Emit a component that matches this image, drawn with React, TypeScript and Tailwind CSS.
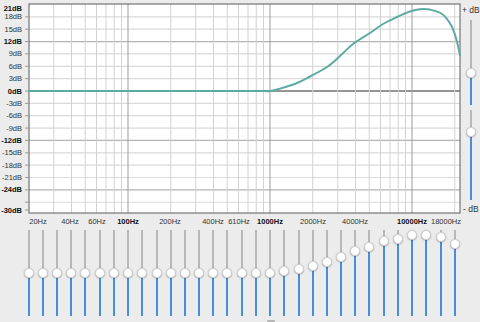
import React from "react";

const fx = (f: number) => 128 + 142 * Math.log10(f / 100);
const dy = (db: number) => 91 - db * 4.12;
const FONT = '"Liberation Sans", Arial, sans-serif';

const PL = 29, PR = 460, PT = 4, PB = 213;

function smoothPath(pts: [number, number][]) {
  let d = `M ${pts[0][0]} ${pts[0][1]}`;
  for (let i = 0; i < pts.length - 1; i++) {
    const p0 = pts[i - 1] || pts[i];
    const p1 = pts[i];
    const p2 = pts[i + 1];
    const p3 = pts[i + 2] || p2;
    const c1x = p1[0] + (p2[0] - p0[0]) / 6;
    const c1y = p1[1] + (p2[1] - p0[1]) / 6;
    const c2x = p2[0] - (p3[0] - p1[0]) / 6;
    const c2y = p2[1] - (p3[1] - p1[1]) / 6;
    d += ` C ${c1x} ${c1y} ${c2x} ${c2y} ${p2[0]} ${p2[1]}`;
  }
  return d;
}

const curvePts: [number, number][] = [
  [29, 91], [250, 91], [262, 91], [270, 91], [280, 88.6], [297, 83], [310, 76.5],
  [327, 67], [340, 56], [353, 44], [370, 33], [383, 24], [397, 17], [410, 11.5],
  [420, 9.2], [430, 9.6], [442, 14], [451, 25], [456, 38], [460, 55],
];

const vFreqs: { f: number; major: boolean }[] = [];
[10, 100, 1000, 10000].forEach((dec) => {
  for (let m = 1; m <= 9; m++) {
    const f = dec * m;
    if (f > 20 && f <= 20000) vFreqs.push({ f, major: m === 1 });
  }
});

const hLines: number[] = [];
for (let d = 18; d >= -27; d -= 3) hLines.push(d);

const yLabels: { t: string; y: number; b: boolean }[] = [
  { t: "21dB", y: 8, b: true },
  ...[18, 15, 12, 9, 6, 3, 0, -3, -6, -9, -12, -15, -18, -21, -24].map((d) => ({
    t: `${d}dB`,
    y: dy(d),
    b: d === 12 || d === 0 || d === -12 || d === -24,
  })),
  { t: "-30dB", y: 210, b: true },
];

const xLabels: { t: string; x: number; b?: boolean }[] = [
  { t: "20Hz", x: 38 },
  { t: "40Hz", x: 70 },
  { t: "60Hz", x: 97 },
  { t: "100Hz", x: 128, b: true },
  { t: "200Hz", x: 170 },
  { t: "400Hz", x: 213 },
  { t: "610Hz", x: 239 },
  { t: "1000Hz", x: 270, b: true },
  { t: "2000Hz", x: 313 },
  { t: "4000Hz", x: 355 },
  { t: "10000Hz", x: 412, b: true },
  { t: "18000Hz", x: 446 },
];

const bands = [20, 25, 31.5, 40, 50, 63, 80, 100, 125, 160, 200, 250, 315, 400, 500, 630, 800, 1000, 1250, 1600, 2000, 2500, 3150, 4000, 5000, 6300, 8000, 10000, 12500, 16000, 20000];
const knobs = [273, 273, 273, 273, 273, 273, 273, 273, 273, 273, 273, 273, 273, 273, 273, 273, 273, 273, 271, 269, 266, 262, 257, 251, 247, 241, 239, 235, 235, 237, 244];

function Chart() {
  return (
    <svg width={462} height={228} className="block shrink-0" style={{ fontFamily: FONT }}>
      <rect x={PL} y={PT} width={PR - PL} height={PB - PT} fill="#ffffff" />
      {hLines.map((d) => (
        <line key={d} x1={PL} x2={PR} y1={dy(d)} y2={dy(d)} stroke={d === 0 ? "#2a2a2a" : d === 12 || d === -12 || d === -24 ? "#b4b4b4" : "#dadada"} strokeWidth={d === 0 ? 1 : 1.2} />
      ))}
      {vFreqs.map(({ f, major }) => (
        <line key={f} x1={fx(f)} x2={fx(f)} y1={PT} y2={PB} stroke={major ? "#9c9c9c" : "#d2d2d2"} strokeWidth={1} />
      ))}
      <rect x={PL} y={PT} width={PR - PL} height={PB - PT} fill="none" stroke="#5a5a5a" strokeWidth={1} />
      {[...hLines, -30].map((d) => (
        <line key={"t" + d} x1={25} x2={PL} y1={d === -30 ? 210 : dy(d)} y2={d === -30 ? 210 : dy(d)} stroke="#9a9a9a" strokeWidth={1} />
      ))}
      <path d={smoothPath(curvePts)} fill="none" stroke="#5eaaa2" strokeWidth={2} strokeLinecap="round" />
      {yLabels.map((l) => (
        <text key={l.t} x={22} y={l.y} textAnchor="end" dominantBaseline="central" fontSize={7.5} fontWeight={l.b ? 700 : 400} fill={l.b ? "#111" : "#333"}>
          {l.t}
        </text>
      ))}
      {xLabels.map((l) => (
        <text key={l.t} x={l.x} y={221} textAnchor="middle" dominantBaseline="central" fontSize={7.5} fontWeight={l.b ? 700 : 400} fill={l.b ? "#111" : "#333"}>
          {l.t}
        </text>
      ))}
    </svg>
  );
}

function Knob({ top }: { top: number }) {
  return (
    <div
      className="absolute left-[-4px] w-[10px] h-[10px] rounded-full bg-white border border-[#d0d0d0] shadow-[0_0.5px_1.5px_rgba(0,0,0,0.35)]"
      style={{ top: top - 5 }}
    />
  );
}

function VTrack({ height, knob }: { height: number; knob: number }) {
  return (
    <div className="relative w-[2px] flex flex-col" style={{ height }}>
      <div className="w-full bg-[#b8b8b8]" style={{ height: knob }} />
      <div className="w-full flex-1 bg-[#4a8ddb]" />
      <Knob top={knob} />
    </div>
  );
}

export default function App() {
  return (
    <div className="w-[480px] h-[322px] bg-[#ececec] flex flex-col overflow-hidden" style={{ fontFamily: FONT }}>
      <div className="flex h-[228px]">
        <Chart />
        <div className="flex-1 flex flex-col items-center pt-[5px] pr-[2px]">
          <div className="h-[10px] text-[8.5px] leading-[10px] text-[#333] whitespace-nowrap">+ dB</div>
          <div className="mt-[5px]">
            <VTrack height={85} knob={53} />
          </div>
          <div className="mt-[5px]">
            <VTrack height={90} knob={22} />
          </div>
          <div className="mt-[4px] h-[10px] text-[8.5px] leading-[10px] text-[#333] whitespace-nowrap">- dB</div>
        </div>
      </div>
      <div className="relative flex-1">
        {bands.map((f, i) => (
          <div key={f} className="absolute top-[2px]" style={{ left: fx(f) - 1 }}>
            <VTrack height={86} knob={knobs[i] - 230} />
          </div>
        ))}
        <div className="absolute left-[267px] top-[92px] w-[8px] h-[2px] rounded-full bg-[#b6b6b6]" />
      </div>
    </div>
  );
}
